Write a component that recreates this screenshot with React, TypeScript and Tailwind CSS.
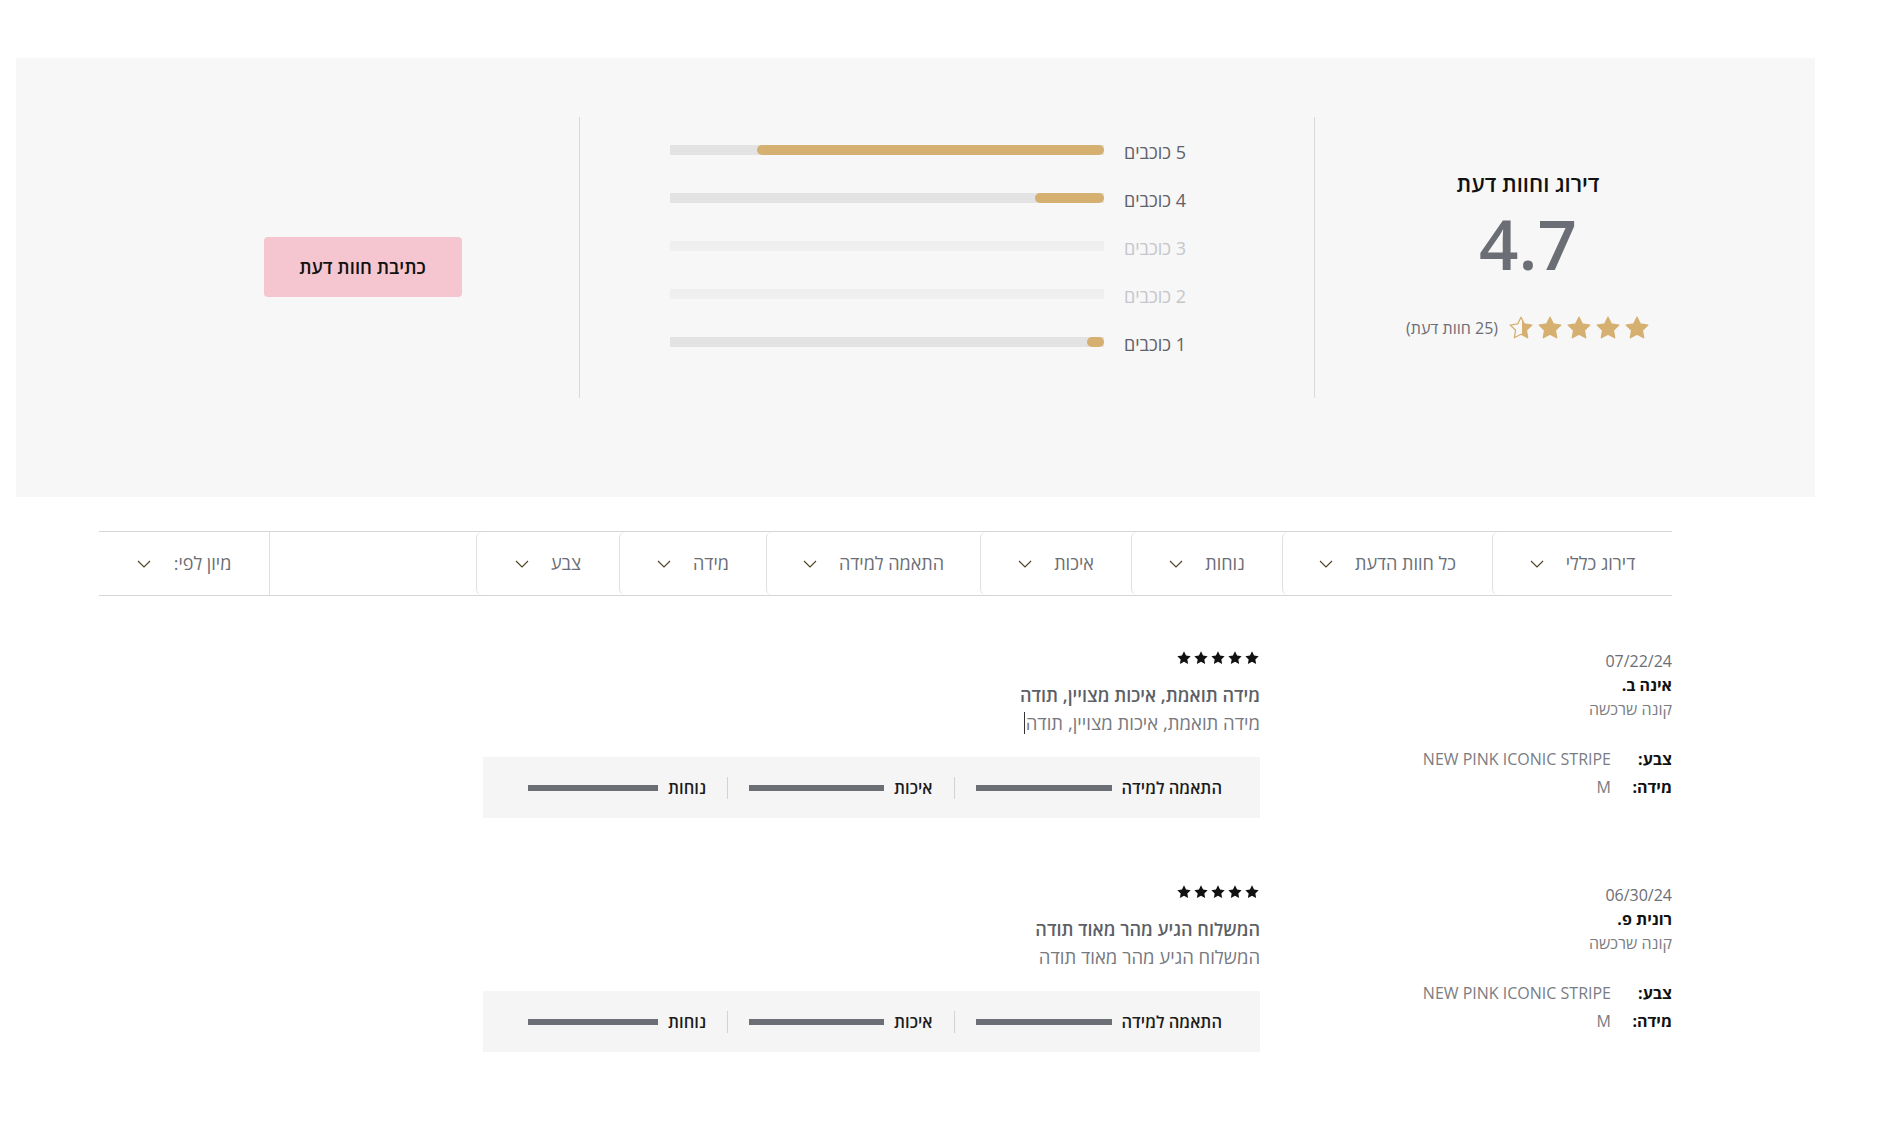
import React from "react";

const GOLD = "#d5b071";
const STAR_POINTS =
  "12,2 15.09,8.26 22,9.27 17,14.14 18.18,21.02 12,17.77 5.82,21.02 7,14.14 2,9.27 8.91,8.26";

const GoldStar = ({ fill = 1, id }: { fill?: number; id: string }) => (
  <svg viewBox="0 0 24 24" className="w-[26px] h-[26px]">
    <defs>
      <linearGradient id={id} x1="0" x2="1" y1="0" y2="0">
        <stop offset={1 - fill} stopColor="#f7f7f7" />
        <stop offset={1 - fill} stopColor={GOLD} />
      </linearGradient>
    </defs>
    <polygon
      points={STAR_POINTS}
      fill={fill >= 1 ? GOLD : `url(#${id})`}
      stroke={GOLD}
      strokeWidth="1.2"
      strokeLinejoin="round"
    />
  </svg>
);

const BlackStars = () => (
  <div className="flex items-center gap-px h-[17px]">
    {[0, 1, 2, 3, 4].map((i) => (
      <svg key={i} viewBox="0 0 24 24" className="w-[16px] h-[16px]">
        <polygon points={STAR_POINTS} fill="#111" />
      </svg>
    ))}
  </div>
);

const Chevron = () => (
  <svg viewBox="0 0 14 8" className="w-[14px] h-[8px] shrink-0">
    <polyline points="1,1 7,7 13,1" fill="none" stroke="#4d3f1f" strokeWidth="1.1" />
  </svg>
);

const bars = [
  { label: "5 כוכבים", pct: 80, active: true },
  { label: "4 כוכבים", pct: 16, active: true },
  { label: "3 כוכבים", pct: 0, active: false },
  { label: "2 כוכבים", pct: 0, active: false },
  { label: "1 כוכבים", pct: 4, active: true },
];

const filters = [
  { label: "דירוג כללי", w: "w-[180px]" },
  { label: "כל חוות הדעת", w: "w-[210px]" },
  { label: "נוחות", w: "w-[151px]" },
  { label: "איכות", w: "w-[151px]" },
  { label: "התאמה למידה", w: "w-[214px]" },
  { label: "מידה", w: "w-[147px]" },
  { label: "צבע", w: "w-[143px]" },
];

const reviews = [
  {
    date: "07/22/24",
    name: "אינה ב.",
    title: "מידה תואמת, איכות מצויין, תודה",
    body: "מידה תואמת, איכות מצויין, תודה",
    caret: true,
  },
  {
    date: "06/30/24",
    name: "רונית פ.",
    title: "המשלוח הגיע מהר מאוד תודה",
    body: "המשלוח הגיע מהר מאוד תודה",
    caret: false,
  },
];

const SubRating = ({ label, barW }: { label: string; barW: string }) => (
  <div className="flex items-center gap-[10px] shrink-0">
    <span className="text-[16.5px] font-semibold text-[#1c1c1c] leading-[24px] whitespace-nowrap">{label}</span>
    <div className={`h-[6px] bg-[#6b6e75] shrink-0 ${barW}`} />
  </div>
);

export default function App() {
  return (
    <div
      dir="rtl"
      className="w-[1891px] min-h-[1129px] bg-white pt-[58px] pb-[60px] font-['Open_Sans','Noto_Sans',sans-serif]"
    >
      {/* summary panel */}
      <div className="ml-[16px] mr-[76px] h-[439px] bg-[#f7f7f7] flex pt-[59px] pb-[99px] px-[74px]">
        <div className="w-[426px] flex flex-col items-center pt-[51px]">
          <div className="text-[22px] leading-[30px] font-semibold text-[#111]">דירוג וחוות דעת</div>
          <div className="mt-[5px] text-[69px] leading-[80px] font-semibold text-[#6b6e75]" dir="ltr">
            4.7
          </div>
          <div className="flex items-center gap-[10px] mt-[32px] h-[25px]">
            <div className="flex items-center gap-[3px]">
              <GoldStar id="s1" />
              <GoldStar id="s2" />
              <GoldStar id="s3" />
              <GoldStar id="s4" />
              <GoldStar id="s5" fill={0.45} />
            </div>
            <span className="text-[16px] text-[#6b6e75]">(25 חוות דעת)</span>
          </div>
        </div>

        <div className="w-[736px] border-x border-[#d9d9d9] flex flex-col gap-[22px] pr-[128px] pt-[20px]">
          {bars.map((b) => (
            <div key={b.label} className="flex items-center h-[26px]">
              <span
                className={`w-[82px] shrink-0 text-[18px] leading-[26px] pt-[3px] ${
                  b.active ? "text-[#5f6168]" : "text-[#c6c6cb]"
                }`}
              >
                {b.label}
              </span>
              <div className={`w-[434px] h-[10px] ${b.active ? "bg-[#e3e3e3]" : "bg-[#efefef]"}`}>
                {b.pct > 0 && (
                  <div className="h-full rounded-full bg-[#d5b071]" style={{ width: `${b.pct}%` }} />
                )}
              </div>
            </div>
          ))}
        </div>

        <div className="flex-1 flex items-center justify-center pl-[56px] pt-[19px]">
          <button className="w-[198px] h-[60px] bg-[#f5c6cf] rounded-[4px] text-[18.5px] font-semibold text-[#111]">
            כתיבת חוות דעת
          </button>
        </div>
      </div>

      {/* filter bar */}
      <div className="ml-[99px] mr-[219px] mt-[34px] h-[65px] border-y border-[#d6d6d6] flex">
        {filters.map((f) => (
          <div
            key={f.label}
            className={`${f.w} h-full flex items-center justify-center gap-[22px] border-l border-[#e0e0e0] rounded-l-[6px]`}
          >
            <span className="text-[18px] text-[#6b6e75]">{f.label}</span>
            <Chevron />
          </div>
        ))}
        <div className="flex-1" />
        <div className="w-[171px] h-full flex items-center justify-center gap-[23px] border-r border-[#e0e0e0]">
          <span className="text-[18px] text-[#6b6e75]">מיון לפי:</span>
          <Chevron />
        </div>
      </div>

      {/* reviews */}
      <div className="ml-[99px] mr-[219px] mt-[53px] flex flex-col gap-[65px]">
        {reviews.map((r) => (
          <div key={r.date} className="flex">
            <div className="w-[412px] shrink-0 flex flex-col">
              <div className="text-[16px] leading-[24px] text-[#6b6e75]">{r.date}</div>
              <div className="text-[16px] leading-[24px] font-bold text-[#111]">{r.name}</div>
              <div className="text-[16px] leading-[24px] text-[#7a7c82]">קונה שרכשה</div>
              <div className="mt-[24px] grid grid-cols-[40px_auto] gap-x-[21px] justify-start">
                <span className="text-[16px] leading-[28px] font-bold text-[#111]">צבע:</span>
                <span className="text-[16px] leading-[28px] text-[#7a7c82]">NEW PINK ICONIC STRIPE</span>
                <span className="text-[16px] leading-[28px] font-bold text-[#111]">מידה:</span>
                <span className="text-[16px] leading-[28px] text-[#7a7c82]">M</span>
              </div>
            </div>

            <div className="w-[777px] flex flex-col items-start">
              <BlackStars />
              <div className="mt-[17px] text-[18px] leading-[24px] font-semibold text-[#5d5f66]">{r.title}</div>
              <div className="mt-[2px] text-[18.5px] leading-[28px] text-[#77797f] flex items-center">
                <span>{r.body}</span>
                {r.caret && <span className="w-px h-[22px] bg-[#333] mr-[1px]" />}
              </div>
              <div className="mt-[20px] w-full h-[61px] bg-[#f5f5f5] flex items-center pr-[38px] pl-[42px]">
                <SubRating label="התאמה למידה" barW="w-[136px]" />
                <div className="w-px h-[22px] bg-[#d3d3d3] mx-[21px] shrink-0" />
                <SubRating label="איכות" barW="w-[135px]" />
                <div className="w-px h-[22px] bg-[#d3d3d3] mx-[21px] shrink-0" />
                <SubRating label="נוחות" barW="w-[130px]" />
              </div>
            </div>
          </div>
        ))}
      </div>
    </div>
  );
}
